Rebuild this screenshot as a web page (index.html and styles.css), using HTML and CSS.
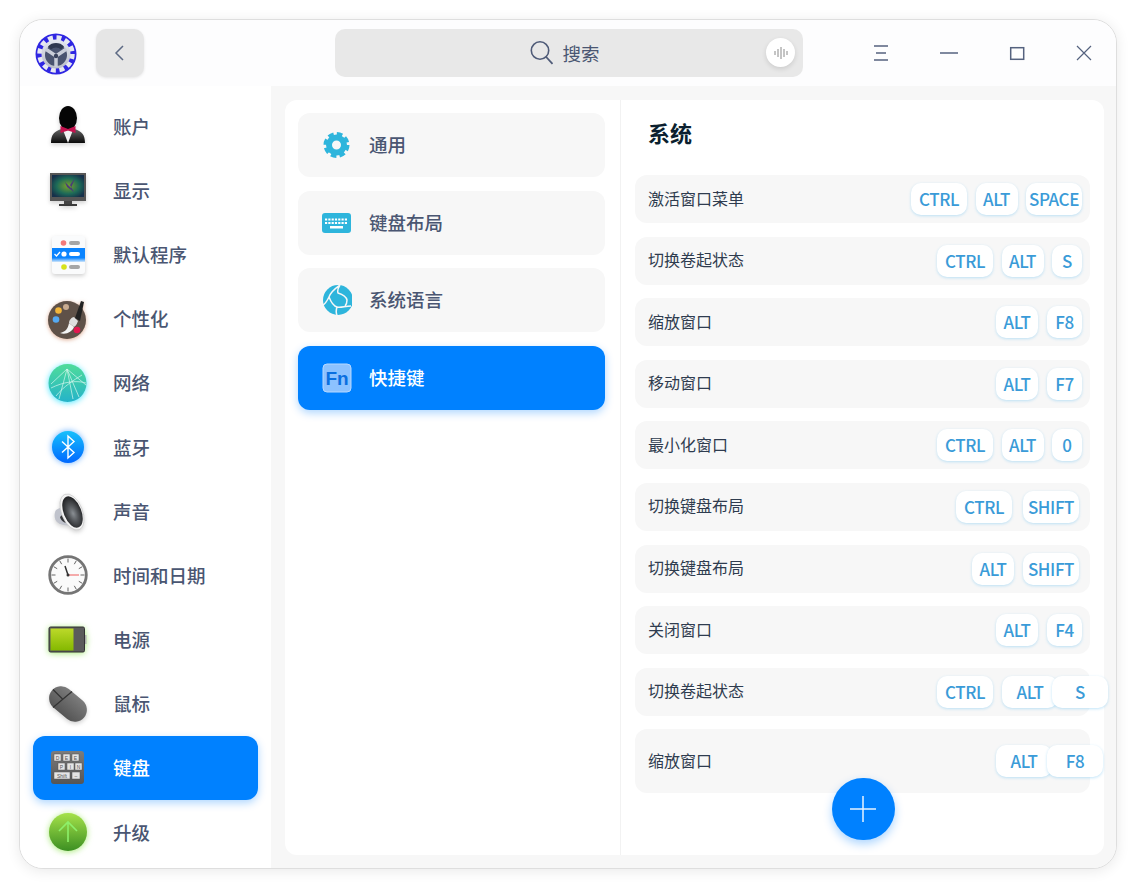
FILE: index.html
```html
<!DOCTYPE html>
<html lang="zh-CN">
<head>
    <meta charset="UTF-8">
    <title>设置</title>
    <link rel="stylesheet" href="styles.css">
</head>
<body>
    <svg class="defs" width="0" height="0">
        <defs>
            <linearGradient id="gPerson" x1="0" y1="0" x2="0" y2="1"><stop offset="0" stop-color="#666"/><stop offset="1" stop-color="#0a0a0a"/></linearGradient>
            <radialGradient id="gScreen" cx=".5" cy=".5" r=".6"><stop offset="0" stop-color="#7aa02c"/><stop offset=".6" stop-color="#1d6a58"/><stop offset="1" stop-color="#16304a"/></radialGradient>
            <linearGradient id="gNet" x1="0" y1="0" x2="0" y2="1"><stop offset="0" stop-color="#4fdc9a"/><stop offset="1" stop-color="#25b3c9"/></linearGradient>
            <linearGradient id="gBt" x1="0" y1="0" x2="0" y2="1"><stop offset="0" stop-color="#17c0fb"/><stop offset="1" stop-color="#0068ff"/></linearGradient>
            <linearGradient id="gUp" x1="0" y1="0" x2="0" y2="1"><stop offset="0" stop-color="#a6e24a"/><stop offset="1" stop-color="#3c8f22"/></linearGradient>
            <linearGradient id="gBat" x1="0" y1="0" x2="0" y2="1"><stop offset="0" stop-color="#bcd92a"/><stop offset="1" stop-color="#84b800"/></linearGradient>
            <linearGradient id="gGrey" x1="0" y1="0" x2="0" y2="1"><stop offset="0" stop-color="#7c7c7c"/><stop offset="1" stop-color="#555"/></linearGradient>
            <linearGradient id="gFade" x1="0" y1="0" x2="0" y2="1"><stop offset="0" stop-color="#0a84ff"/><stop offset=".7" stop-color="#0a84ff"/><stop offset="1" stop-color="#cfe6fb"/></linearGradient>
            <radialGradient id="gCone" cx=".5" cy=".55" r=".55"><stop offset="0" stop-color="#8a8f94"/><stop offset=".45" stop-color="#55585c"/><stop offset="1" stop-color="#1f2022"/></radialGradient>
            <linearGradient id="gRing" x1="0" y1="0" x2="0" y2="1"><stop offset="0" stop-color="#e4e7f0"/><stop offset="1" stop-color="#b9bdc9"/></linearGradient>
        </defs>
    </svg>
    <div class="window">
        <div class="titlebar">
            <svg class="logo" viewBox="0 0 42 42">
                <circle cx="21" cy="21" r="20.500" fill="#2f26e2"/>
                <circle cx="21" cy="21" r="16" fill="none" stroke="#e6e8f2" stroke-width="5.500" stroke-dasharray="4.800 3.580"/>
                <circle cx="21" cy="21" r="14.500" fill="url(#gRing)"/>
                <circle cx="21" cy="22" r="11" fill="#4a5470"/>
                <path d="M21 23V34M21 23L10.500 16M21 23L31.500 16" stroke="#c9cdd8" stroke-width="3.500"/>
                <path d="M13 13.500a11 11 0 0 1 16 0l-3 3a7 7 0 0 0-10 0z" fill="#2f3850"/>
                <circle cx="21" cy="23" r="2.200" fill="#39425c"/>
            </svg>
            <button class="back">
                <svg width="12" height="18" viewBox="0 0 12 18"><path d="M10 2L3 9l7 7" fill="none" stroke="#5d6a84" stroke-width="1.500"/></svg>
            </button>
            <div class="search">
                <svg class="search-icon" width="26" height="26" viewBox="0 0 26 26"><circle cx="11" cy="10.500" r="8.700" fill="none" stroke="#4f5b78" stroke-width="1.600"/><path d="M17.200 17l6.300 6.800" stroke="#4f5b78" stroke-width="1.800"/></svg>
                <span>搜索</span>
                <div class="voice">
                    <svg width="14" height="14" viewBox="0 0 14 14"><path d="M1 5v4M4 3v8M7 1v12M10 3v8M13 5v4" stroke="#8a8a8a" stroke-width="1"/></svg>
                </div>
            </div>
            <div class="controls">
                <svg width="16" height="16" viewBox="0 0 16 16"><path d="M1 1h14M3 8h10M1 15h14" stroke="#55627f" stroke-width="1.300"/></svg>
                <svg width="18" height="16" viewBox="0 0 18 16"><path d="M0 8h18" stroke="#55627f" stroke-width="1.500"/></svg>
                <svg width="16" height="15" viewBox="0 0 16 15"><rect x="1.700" y="1.700" width="13" height="11.600" fill="none" stroke="#55627f" stroke-width="1.500"/></svg>
                <svg width="16" height="16" viewBox="0 0 16 16"><path d="M1 1l14 14M15 1L1 15" stroke="#55627f" stroke-width="1.200"/></svg>
            </div>
        </div>
        <div class="body">
            <div class="sidebar">
                <div class="nav-item">
                    <svg class="nav-icon soft" viewBox="0 0 40 40">
                        <path d="M3 37c0-8 3-12 11-14l6 2 6-2c8 2 11 6 11 14z" fill="url(#gPerson)"/>
                        <path d="M15 24l5 13 5-13-5 1z" fill="#f2f2f2"/>
                        <ellipse cx="20" cy="12" rx="9" ry="12" fill="#050505"/>
                        <path d="M12.500 20l7.500 3 7.500-3v7l-7.500-2.500-7.500 2.500z" fill="#c4114e"/>
                    </svg>
                    <span>账户</span>
                </div>
                <div class="nav-item">
                    <svg class="nav-icon soft" viewBox="0 0 40 40">
                        <rect x="2" y="3" width="36" height="28" fill="#565656"/>
                        <rect x="4" y="5" width="32" height="22" fill="url(#gScreen)"/>
                        <path d="M17 12l6 6 4-10-5 7 4 7-7-5z" fill="#4a3a7a"/>
                        <rect x="16" y="31" width="8" height="3" fill="#444"/>
                        <rect x="11" y="34" width="18" height="2" fill="#3a3a3a"/>
                    </svg>
                    <span>显示</span>
                </div>
                <div class="nav-item">
                    <svg class="nav-icon soft" viewBox="0 0 40 40">
                        <rect x="4" y="2" width="33" height="38" rx="3" fill="#fafbfc"/>
                        <circle cx="15.500" cy="9" r="2.800" fill="#f37a7a"/>
                        <rect x="21" y="7" width="11" height="4" rx="2" fill="#a6a6a6"/>
                        <rect x="4" y="14" width="33" height="14" fill="url(#gFade)"/>
                        <path d="M6.500 20l2 2 3.500-4" fill="none" stroke="#fff" stroke-width="1.300"/>
                        <circle cx="16" cy="20" r="2.600" fill="#fff"/>
                        <rect x="21" y="18" width="11" height="4" rx="2" fill="#fff"/>
                        <circle cx="16" cy="33" r="2.800" fill="#d7e21c"/>
                        <rect x="21" y="31" width="11" height="4" rx="2" fill="#a6a6a6"/>
                    </svg>
                    <span>默认程序</span>
                </div>
                <div class="nav-item">
                    <svg class="nav-icon glow-brown" viewBox="0 0 40 40">
                        <circle cx="19" cy="21" r="19" fill="#5f5148"/>
                        <circle cx="10.500" cy="11.500" r="3.300" fill="#f2b53b"/>
                        <circle cx="18" cy="8" r="3" fill="#c9ab90"/>
                        <circle cx="8" cy="20.500" r="3.300" fill="#55a9f2"/>
                        <circle cx="29" cy="31" r="3.300" fill="#e3174f"/>
                        <path d="M12 34c5-1 8-4 9-10l5 4c-2 5-8 8-14 6z" fill="#f4f4f4"/>
                        <path d="M21 24c0-3 3-6 5-6l4 4c-1 2-1 4-4 6z" fill="#dedede"/>
                        <path d="M27 19l6-17 3 1-4 19z" fill="#222"/>
                    </svg>
                    <span>个性化</span>
                </div>
                <div class="nav-item">
                    <svg class="nav-icon glow-cyan" viewBox="0 0 40 40">
                        <circle cx="19.500" cy="20" r="19" fill="url(#gNet)"/>
                        <path d="M19 6L3 21M19 6l-8 30M19 6l6 30M19 6l19 16M3 25c12-6 25-8 35-5M8 33c8-10 18-16 26-21M19 6l12 28" fill="none" stroke="#d6f7ee" stroke-width=".7"/>
                    </svg>
                    <span>网络</span>
                </div>
                <div class="nav-item">
                    <svg class="nav-icon glow-blue" viewBox="0 0 40 40">
                        <circle cx="20" cy="20" r="16" fill="url(#gBt)"/>
                        <path d="M14 14.500l12 11-6 5.500V9l6 5.500-12 11" fill="none" stroke="#fff" stroke-width="1.400"/>
                    </svg>
                    <span>蓝牙</span>
                </div>
                <div class="nav-item">
                    <svg class="nav-icon soft" viewBox="0 0 40 40">
                        <path d="M8 19l11-6 6 21c-6 1-13 0-16-3-3-3-3-9-1-12z" fill="#c0c3cc"/>
                        <path d="M12 26l6-6 7 13c-6 0-12-2-13-7z" fill="#34363a"/>
                        <ellipse cx="24" cy="21" rx="10.500" ry="19" transform="rotate(-22 24 21)" fill="#f3f3f3" stroke="#c4c4c4" stroke-width=".6"/>
                        <ellipse cx="24.500" cy="21" rx="8.800" ry="16.500" transform="rotate(-22 24.500 21)" fill="url(#gCone)"/>
                    </svg>
                    <span>声音</span>
                </div>
                <div class="nav-item">
                    <svg class="nav-icon" viewBox="0 0 40 40">
                        <circle cx="20" cy="20" r="18.300" fill="#fafafa" stroke="#757575" stroke-width="2.800"/>
                        <path d="M20 3.500v4M20 32.500v4M3.500 20h4M32.500 20h4M11.700 5.700l2 3.500M28.300 5.700l-2 3.500M5.700 11.700l3.500 2M34.300 11.700l-3.500 2M5.700 28.300l3.500-2M34.300 28.300l-3.500-2M11.700 34.300l2-3.500M28.300 34.300l-2-3.500" stroke="#666" stroke-width="1"/>
                        <path d="M20 20l-3-9" stroke="#333" stroke-width="1.500"/>
                        <path d="M20 20h11" stroke="#ef5a5a" stroke-width="1"/>
                        <circle cx="20" cy="20" r="1.500" fill="#333"/>
                    </svg>
                    <span>时间和日期</span>
                </div>
                <div class="nav-item">
                    <svg class="nav-icon glow-green" viewBox="0 0 40 40">
                        <rect x="36" y="15" width="2.500" height="9" fill="#b0b0b0"/>
                        <rect x="1" y="7" width="35.500" height="25" rx="1.500" fill="#5b5b5b" stroke="#333" stroke-width="1"/>
                        <rect x="2.500" y="8.500" width="23" height="22" fill="url(#gBat)"/>
                    </svg>
                    <span>电源</span>
                </div>
                <div class="nav-item">
                    <svg class="nav-icon soft" viewBox="0 0 40 40">
                        <rect x="-1" y="8" width="42" height="24" rx="12" transform="rotate(40 20 20)" fill="url(#gGrey)"/>
                        <path d="M5 23.500L24 7.500M5 5.500L15 15.500" stroke="#333" stroke-width="1.200" fill="none"/>
                    </svg>
                    <span>鼠标</span>
                </div>
                <div class="nav-item active">
                    <svg class="nav-icon" viewBox="0 0 40 40">
                        <rect x="3" y="3" width="33" height="33" rx="3" fill="url(#gGrey)"/>
                        <g class="keycaps">
                            <rect x="6" y="6" width="7" height="7"/><rect x="15" y="6" width="7" height="7"/><rect x="24" y="6" width="7" height="7"/>
                            <rect x="10" y="15" width="7" height="7"/><rect x="19" y="15" width="7" height="7"/><rect x="27" y="15" width="7" height="7"/>
                            <rect x="6" y="24" width="16" height="7"/><rect x="24" y="24" width="8" height="7"/>
                        </g>
                        <g class="keytext">
                            <text x="9.500" y="11.500">D</text><text x="18.500" y="11.500">E</text><text x="27.500" y="11.500">E</text>
                            <text x="13.500" y="20.500">P</text><text x="22.500" y="20.500">I</text><text x="30.500" y="20.500">N</text>
                            <text x="14" y="29.500">Shift</text><text x="28" y="29.500">–</text>
                        </g>
                    </svg>
                    <span>键盘</span>
                </div>
                <div class="nav-item">
                    <svg class="nav-icon glow-green" viewBox="0 0 40 40">
                        <circle cx="20" cy="20" r="19" fill="url(#gUp)"/>
                        <path d="M20 30V11M11 19l9-9 9 9" fill="none" stroke="#8df06a" stroke-width="1.600"/>
                    </svg>
                    <span>升级</span>
                </div>
            </div>
            <div class="content">
                <div class="panel">
                    <div class="groups">
                        <div class="group">
                            <svg class="group-icon" viewBox="0 0 30 30"><circle cx="14.500" cy="15" r="7.500" fill="none" stroke="#2eb5dc" stroke-width="6"/><circle cx="14.500" cy="15" r="11" fill="none" stroke="#2eb5dc" stroke-width="4" stroke-dasharray="5.500 3.140"/></svg>
                            <span>通用</span>
                        </div>
                        <div class="group">
                            <svg class="group-icon" viewBox="0 0 30 30"><rect y="5" width="29" height="20" rx="3" fill="#2eb5dc"/><path d="M3 11.500h23M3 15h23" stroke="#fff" stroke-width="2" stroke-dasharray="2.200 1.100"/><rect x="8" y="18" width="13" height="2.500" fill="#fff"/></svg>
                            <span>键盘布局</span>
                        </div>
                        <div class="group">
                            <svg class="group-icon" viewBox="-1 0 30 30"><circle cx="15" cy="15" r="15" fill="#2eb5dc"/><path d="M17 0c-4 3-9 6-11 12 2 5 4 9 8 10 4 1 8-1 14-1M6 12C4 16 2 19 0 20M14 22c-1 3-1 6 0 8M17 0c-2 3-3 5-2 8 3 1 8 3 9 7 0 2 0 4-2 6" fill="none" stroke="#f7f7f7" stroke-width="1.500"/></svg>
                            <span>系统语言</span>
                        </div>
                        <div class="group active">
                            <svg class="group-icon" viewBox="-1 0 30 30"><rect x="0" y="1" width="28" height="28" rx="4" fill="#8cc2ff" stroke="#b6d8ff" stroke-width="1"/><text class="fn" x="14" y="21.500">Fn</text></svg>
                            <span>快捷键</span>
                        </div>
                    </div>
                    <div class="shortcuts">
                        <h2>系统</h2>
                        <div class="rows">
                            <div class="row">
                                <span class="label">激活窗口菜单</span>
                                <div class="keys three"><span class="key wide">CTRL</span><span class="key">ALT</span><span class="key wide">SPACE</span></div>
                            </div>
                            <div class="row">
                                <span class="label">切换卷起状态</span>
                                <div class="keys three"><span class="key wide">CTRL</span><span class="key">ALT</span><span class="key tiny">S</span></div>
                            </div>
                            <div class="row">
                                <span class="label">缩放窗口</span>
                                <div class="keys"><span class="key">ALT</span><span class="key small">F8</span></div>
                            </div>
                            <div class="row">
                                <span class="label">移动窗口</span>
                                <div class="keys"><span class="key">ALT</span><span class="key small">F7</span></div>
                            </div>
                            <div class="row">
                                <span class="label">最小化窗口</span>
                                <div class="keys three"><span class="key wide">CTRL</span><span class="key">ALT</span><span class="key tiny">0</span></div>
                            </div>
                            <div class="row">
                                <span class="label">切换键盘布局</span>
                                <div class="keys shift wide-gap"><span class="key wide">CTRL</span><span class="key wide">SHIFT</span></div>
                            </div>
                            <div class="row">
                                <span class="label">切换键盘布局</span>
                                <div class="keys shift"><span class="key">ALT</span><span class="key wide">SHIFT</span></div>
                            </div>
                            <div class="row">
                                <span class="label">关闭窗口</span>
                                <div class="keys"><span class="key">ALT</span><span class="key small">F4</span></div>
                            </div>
                            <div class="row">
                                <span class="label">切换卷起状态</span>
                                <div class="keys over-s"><span class="key wide">CTRL</span><span class="key wide">ALT</span><span class="key wide">S</span></div>
                            </div>
                            <div class="row tall">
                                <span class="label">缩放窗口</span>
                                <div class="keys over-f"><span class="key wide">ALT</span><span class="key wide">F8</span></div>
                            </div>
                        </div>
                        <button class="add">
                            <svg width="26" height="26" viewBox="0 0 26 26"><path d="M13 0v26M0 13h26" stroke="#e6f2ff" stroke-width="1.500"/></svg>
                        </button>
                    </div>
                </div>
            </div>
        </div>
    </div>
</body>
</html>
```

FILE: styles.css
```css
* {
    box-sizing: border-box;
}
body {
    margin: 0;
    padding: 19px;
    background: #fff;
    font-family: "Noto Sans CJK SC", "Noto Sans", sans-serif;
    color: #4a5672;
}
.defs {
    position: absolute;
}
.window {
    width: 1098px;
    height: 850px;
    border: 1px solid #dedede;
    border-radius: 24px;
    overflow: hidden;
    display: flex;
    flex-direction: column;
    background: #fff;
    box-shadow: 0 2px 14px rgba(0, 0, 0, 0.09);
}

/* title bar */
.titlebar {
    height: 66px;
    flex: none;
    display: flex;
    align-items: center;
    padding-left: 15px;
    background: #fdfdfe;
}
.logo {
    width: 42px;
    height: 42px;
    flex: none;
    margin-top: 1px;
}
.back {
    width: 48px;
    height: 48px;
    margin-left: 19px;
    border: none;
    border-radius: 10px;
    background: #e6e6e6;
    box-shadow: 0 1px 3px rgba(0, 0, 0, 0.1);
    display: flex;
    align-items: center;
    justify-content: center;
}
.back svg {
    margin-left: -3px;
}
.search {
    width: 468px;
    height: 48px;
    margin-left: 191px;
    border-radius: 10px;
    background: #e8e8e8;
    position: relative;
    display: flex;
    align-items: center;
    justify-content: center;
    gap: 7px;
    font-size: 18.5px;
}
.search-icon {
    margin-left: -9px;
}
.voice {
    position: absolute;
    right: 8px;
    top: 9px;
    width: 29px;
    height: 29px;
    border-radius: 50%;
    background: #fff;
    box-shadow: 0 2px 5px rgba(0, 0, 0, 0.12);
    display: flex;
    align-items: center;
    justify-content: center;
}
.controls {
    display: flex;
    align-items: center;
    margin-left: 70px;
    gap: 51px;
}

/* left nav */
.body {
    flex: 1;
    display: flex;
    min-height: 0;
}
.sidebar {
    width: 251px;
    flex: none;
    padding: 8px 13px 0 13px;
    background: #fff;
}
.nav-item {
    height: 64.2px;
    display: flex;
    align-items: center;
    padding-left: 15px;
    gap: 25px;
    border-radius: 12px;
    font-size: 18.5px;
    font-weight: 500;
}
.nav-item span {
    margin-bottom: 1px;
}
.nav-item.active {
    background: #0081ff;
    color: #fff;
    box-shadow: 0 3px 9px rgba(0, 129, 255, 0.32);
}
.nav-icon {
    width: 40px;
    height: 40px;
    flex: none;
    overflow: visible;
}
.soft {
    filter: drop-shadow(0 2px 2px rgba(0, 0, 0, 0.18));
}
.glow-cyan {
    filter: drop-shadow(0 1px 3px rgba(0, 220, 255, 0.7));
}
.glow-blue {
    filter: drop-shadow(0 0 3px rgba(0, 120, 255, 0.6));
}
.glow-green {
    filter: drop-shadow(0 1px 3px rgba(110, 220, 30, 0.6));
}
.glow-brown {
    filter: drop-shadow(0 1px 2px rgba(190, 90, 40, 0.5));
}
.keycaps rect {
    fill: #e4e4e4;
    stroke: #555;
    stroke-width: 0.5;
}
.keytext text {
    font-family: "Liberation Sans", sans-serif;
    font-size: 5px;
    fill: #555;
    text-anchor: middle;
}

/* main area */
.content {
    flex: 1;
    min-width: 0;
    padding: 14px 12px 13px 14px;
    background: #f7f7f7;
}
.panel {
    height: 100%;
    border-radius: 12px;
    background: #fff;
    display: flex;
}
.groups {
    width: 335px;
    flex: none;
    padding: 13px 15px 0 13px;
    display: flex;
    flex-direction: column;
    gap: 13.7px;
}
.group {
    height: 64px;
    display: flex;
    align-items: center;
    padding-left: 24px;
    gap: 17px;
    border-radius: 12px;
    background: #f7f7f7;
    font-size: 18.5px;
    font-weight: 500;
}
.group span {
    margin-bottom: 2px;
}
.group.active {
    background: #0081ff;
    color: #fff;
    box-shadow: 0 3px 9px rgba(0, 129, 255, 0.32);
}
.group-icon {
    width: 30px;
    height: 30px;
    flex: none;
}
.fn {
    font-family: "Liberation Sans", sans-serif;
    font-size: 19px;
    font-weight: 700;
    fill: #0a6fe0;
    text-anchor: middle;
}

.shortcuts {
    flex: 1;
    min-width: 0;
    position: relative;
    border-left: 1px solid #f2f2f2;
    padding: 0 14px;
}
.shortcuts h2 {
    height: 75px;
    margin: 0;
    padding-left: 13px;
    font-size: 22px;
    font-weight: 700;
    line-height: 65px;
    color: #0b1f2f;
}
.rows {
    display: flex;
    flex-direction: column;
    gap: 13.6px;
}
.row {
    height: 48px;
    display: flex;
    align-items: center;
    justify-content: space-between;
    padding: 0 8px 0 13px;
    border-radius: 12px;
    background: #f7f7f7;
}
.row.tall {
    height: 64px;
}
.label {
    font-size: 16px;
    color: #2f3c4f;
    margin-bottom: 3px;
}
.keys {
    display: flex;
    gap: 9px;
}
.keys.three {
    gap: 8.5px;
}
.keys.shift {
    margin-right: 3px;
}
.keys.wide-gap {
    gap: 11px;
}
.key {
    width: 42px;
    height: 32px;
    display: flex;
    align-items: center;
    justify-content: center;
    padding-bottom: 1px;
    border-radius: 10px;
    background: #fff;
    box-shadow: 0 1px 3px rgba(100, 190, 240, 0.4);
    font-size: 17px;
    font-weight: 500;
    letter-spacing: -0.4px;
    color: #3a9bd8;
}
.key.wide {
    width: 56px;
}
.key.small {
    width: 35px;
}
.key.tiny {
    width: 30px;
}
.over-s {
    gap: 0;
    margin-right: -26px;
}
.over-s .key:nth-child(2) {
    margin-left: 9px;
    margin-right: -6px;
}
.over-s .key:nth-child(3) {
    position: relative;
}
.over-f {
    gap: 0;
    margin-right: -21px;
}
.over-f .key:first-child {
    margin-right: -5px;
}
.over-f .key:last-child {
    position: relative;
}
.add {
    position: absolute;
    left: 211px;
    bottom: 15px;
    width: 62.5px;
    height: 62.5px;
    border: none;
    border-radius: 50%;
    background: #0081ff;
    box-shadow: 0 4px 10px rgba(0, 129, 255, 0.32);
    display: flex;
    align-items: center;
    justify-content: center;
}
```
